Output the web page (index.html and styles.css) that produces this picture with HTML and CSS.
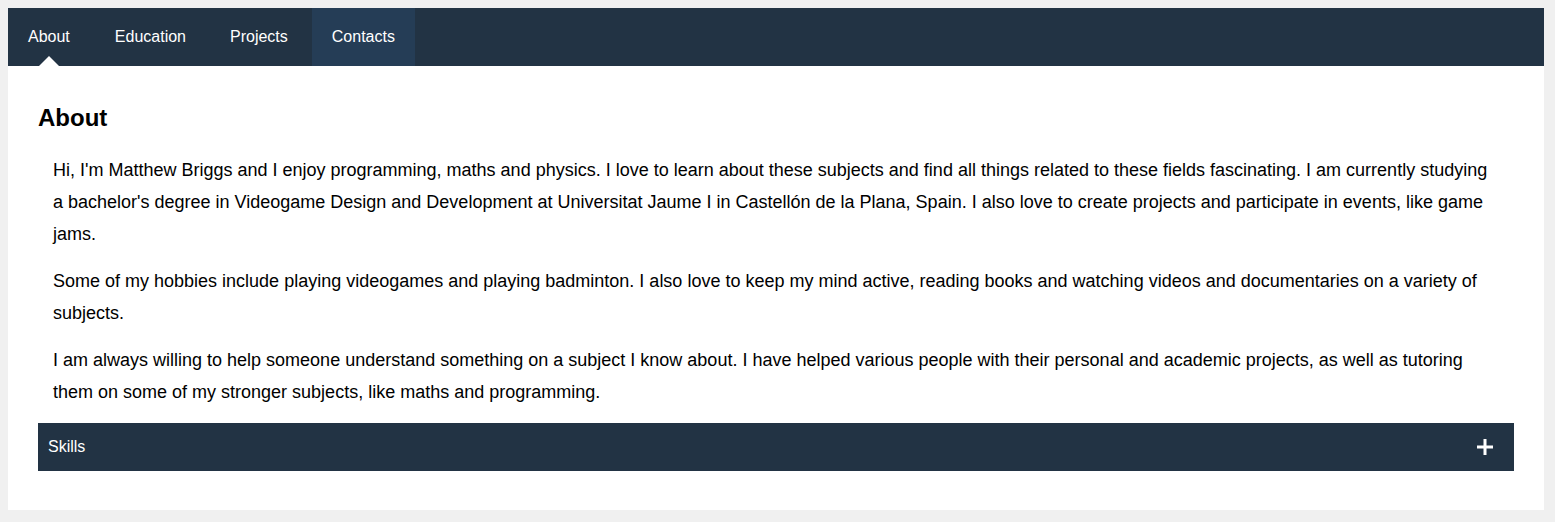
FILE: index.html
```html
<!DOCTYPE html>
<html>
<head>
<meta charset="utf-8">
<link rel="stylesheet" href="styles.css">
</head>
<body>
<div class="page">
  <nav class="nav">
    <a class="nav-item active">About</a>
    <a class="nav-item">Education</a>
    <a class="nav-item">Projects</a>
    <a class="nav-item hover">Contacts</a>
  </nav>
  <main class="content">
    <h2 class="title">About</h2>
    <div class="text">
      <p>Hi, I'm Matthew Briggs and I enjoy programming, maths and physics. I love to learn about these subjects and find all things related to these fields fascinating. I am currently studying a bachelor's degree in Videogame Design and Development at Universitat Jaume I in Castellón de la Plana, Spain. I also love to create projects and participate in events, like game jams.</p>
      <p>Some of my hobbies include playing videogames and playing badminton. I also love to keep my mind active, reading books and watching videos and documentaries on a variety of subjects.</p>
      <p>I am always willing to help someone understand something on a subject I know about. I have helped various people with their personal and academic projects, as well as tutoring them on some of my stronger subjects, like maths and programming.</p>
    </div>
    <div class="accordion">
      <span class="acc-label">Skills</span>
      <svg class="acc-icon" width="16" height="16" viewBox="0 0 16 16"><rect x="0" y="6.5" width="16" height="3" fill="#fff"/><rect x="6.5" y="0" width="3" height="16" fill="#fff"/></svg>
    </div>
  </main>
</div>
</body>
</html>
```
FILE: styles.css
```css
html, body {
  margin: 0;
  padding: 0;
}
body {
  background: #f0f0f0;
  font-family: "Liberation Sans", Arial, sans-serif;
  padding: 8px;
}
.page {
  width: 1536px;
  background: #fff;
}
.nav {
  display: flex;
  gap: 4px;
  height: 58px;
  background: #223344;
}
.nav-item {
  position: relative;
  display: flex;
  align-items: center;
  padding: 0 20px;
  color: #fff;
  font-size: 16px;
  cursor: pointer;
}
.nav-item:first-child {
  margin-right: 1px;
}
.nav-item.hover {
  background: #253d56;
}
.nav-item.active::after {
  content: "";
  position: absolute;
  left: 50%;
  bottom: 0;
  margin-left: -10px;
  border-left: 10px solid transparent;
  border-right: 10px solid transparent;
  border-bottom: 10px solid #fff;
}
.content {
  padding: 38px 30px 39px 30px;
}
.title {
  margin: 0 0 22px 0;
  font-size: 24px;
  font-weight: bold;
  color: #000;
  line-height: 28px;
}
.text {
  padding: 0 15px;
}
.text p {
  margin: 0 0 15px 0;
  font-size: 18px;
  line-height: 32px;
  color: #000;
}
.accordion {
  display: flex;
  align-items: center;
  justify-content: space-between;
  height: 48px;
  padding: 0 21px 0 10px;
  background: #223344;
  color: #fff;
  font-size: 16px;
}
```
